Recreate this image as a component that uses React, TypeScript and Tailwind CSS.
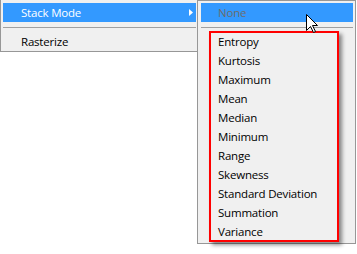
import React from "react";

const items = [
  "Entropy",
  "Kurtosis",
  "Maximum",
  "Mean",
  "Median",
  "Minimum",
  "Range",
  "Skewness",
  "Standard Deviation",
  "Summation",
  "Variance",
];

export default function App() {
  return (
    <div
      className="relative w-[357px] h-[254px] bg-white overflow-hidden text-[11.5px] tracking-[-0.2px] text-black"
      style={{ fontFamily: '"Open Sans", "Noto Sans", sans-serif' }}
    >
      <div className="flex items-start">
        {/* main menu */}
        <div className="w-[199px] h-[52px] bg-[#f0f0f0] border-l border-r border-b border-[#979797] pt-[3px] px-[2px]">
          <div className="relative h-[19px] bg-[#3399ff] text-white flex items-center pl-[18px] leading-none">
            Stack Mode
            <svg className="absolute right-[3px] top-[6px]" width="4" height="7" viewBox="0 0 4 7">
              <path d="M0 0 L4 3.5 L0 7 Z" fill="#ffffff" />
            </svg>
          </div>
          <div className="h-[10px] flex items-center">
            <div className="h-px w-full bg-[#a0a0a0]" />
          </div>
          <div className="h-[19px] flex items-center pl-[18px] leading-none">Rasterize</div>
        </div>
        {/* submenu */}
        <div className="relative z-10 -ml-[2px] w-[159px] h-[244px] bg-[#f0f0f0] border border-[#979797] pt-[2px] pl-[3px] pr-[2px]">
          <div className="h-[19px] bg-[#3399ff] text-[#6d6d6d] flex items-center pl-[17px] leading-none">None</div>
          <div className="h-[10px] flex items-center">
            <div className="h-px w-full bg-[#a0a0a0]" />
          </div>
          <div className="flex flex-col">
            {items.map((t) => (
              <div key={t} className="h-[19px] flex items-center pl-[17px] leading-none">
                {t}
              </div>
            ))}
          </div>
        </div>
      </div>
      {/* red annotation box */}
      <div className="absolute left-[209px] top-[31px] w-[130px] h-[211px] border-2 border-[#ff0000] shadow-[3px_3px_4px_rgba(0,0,0,0.45)] z-20" />
      {/* cursor */}
      <svg className="absolute left-[306px] top-[14px] z-30" width="13" height="20" viewBox="0 0 13 20">
        <path
          d="M0.5 0.5 L0.5 16.5 L4.5 12.5 L7.5 18.5 L9.5 17.5 L6.5 11.5 L11.5 11.5 Z"
          fill="#ffffff"
          stroke="#000000"
          strokeWidth="1"
          strokeLinejoin="miter"
        />
      </svg>
    </div>
  );
}
